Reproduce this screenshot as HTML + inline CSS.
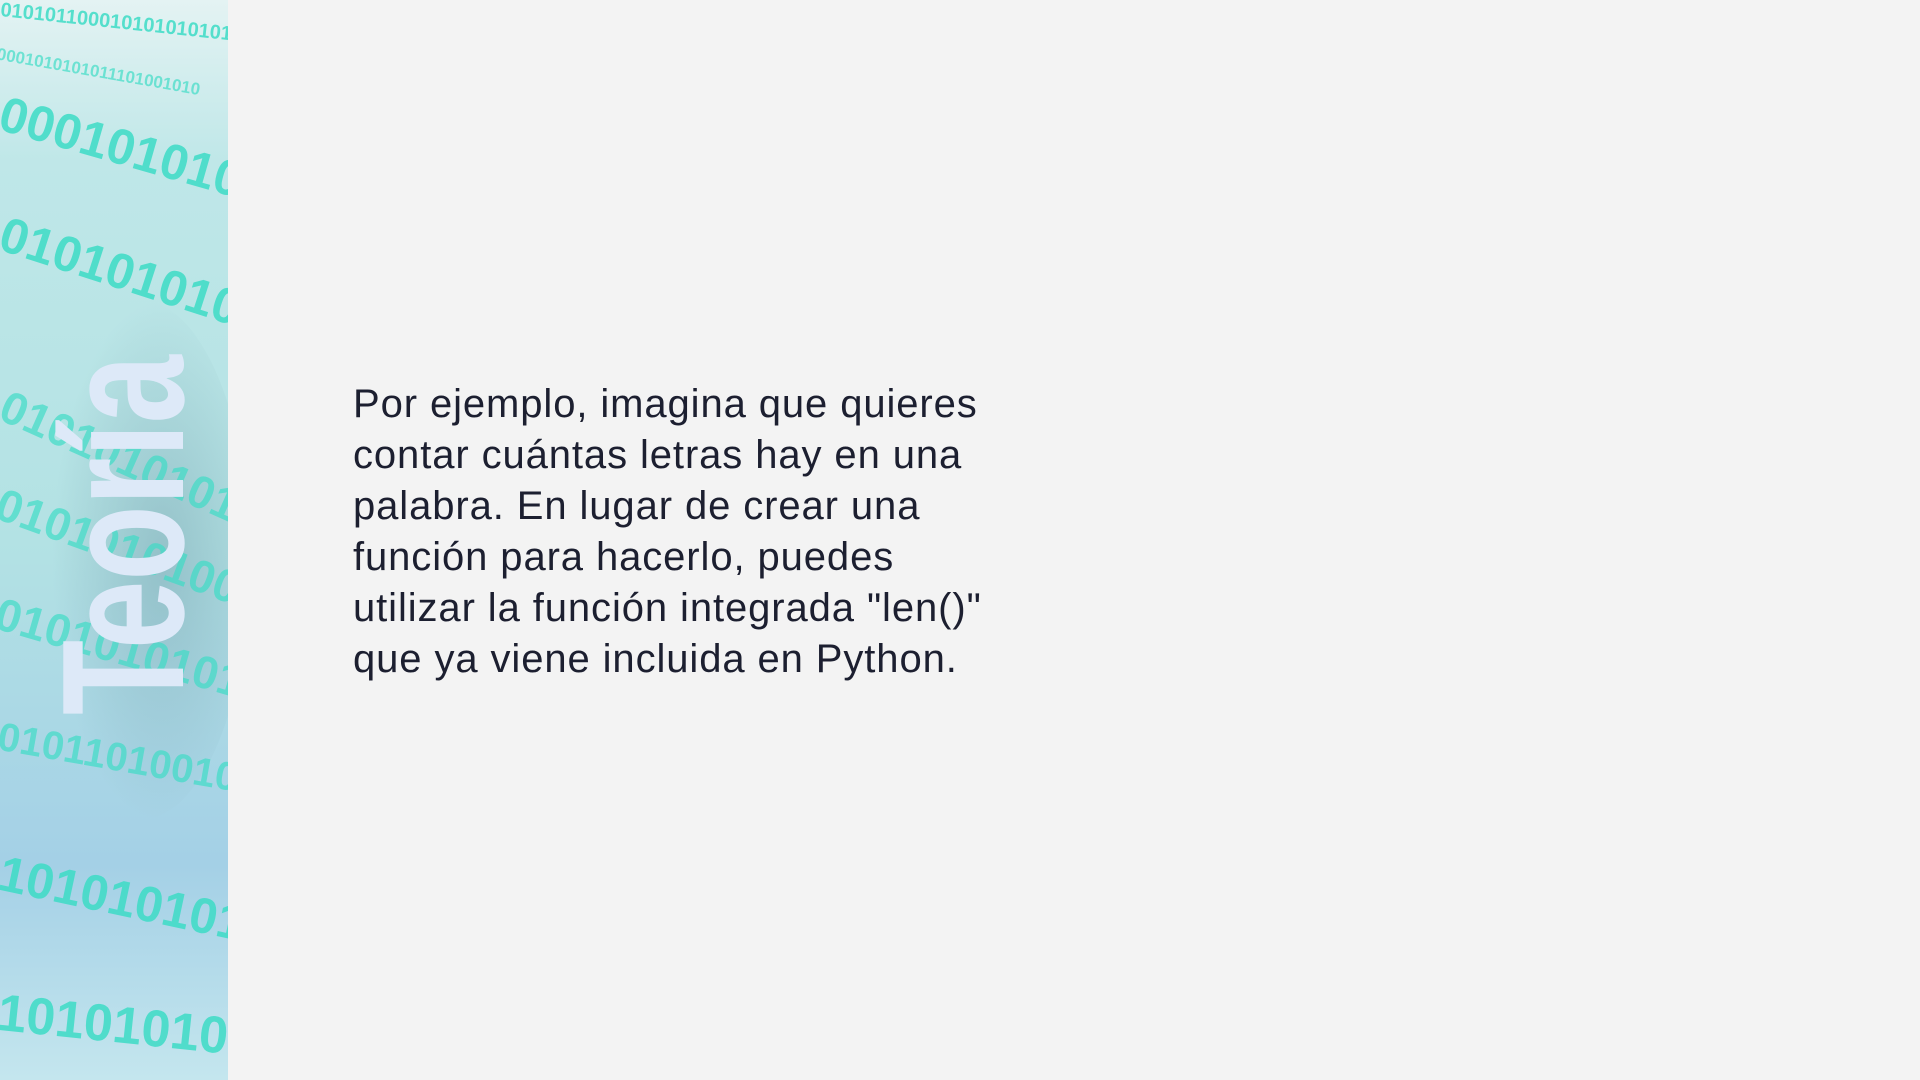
<!DOCTYPE html>
<html><head><meta charset="utf-8"><style>
html,body{margin:0;padding:0;width:1920px;height:1080px;overflow:hidden;background:#f3f3f3}
.panel{position:absolute;left:0;top:0;width:228px;height:1080px;overflow:hidden}
.txt{position:absolute;left:353px;top:379px;font-family:"Liberation Sans",sans-serif;font-size:40px;line-height:51px;color:#1c1f30;letter-spacing:0.9px;white-space:nowrap}
</style></head><body>
<div class="panel">
<svg width="228" height="1080" viewBox="0 0 228 1080">
<defs>
<linearGradient id="g" x1="0" y1="0" x2="0" y2="1">
<stop offset="0" stop-color="#e4f3f3"/>
<stop offset="0.15" stop-color="#bfe7e8"/>
<stop offset="0.5" stop-color="#b3e2e4"/>
<stop offset="0.8" stop-color="#a4d0e6"/>
<stop offset="1" stop-color="#c4e6ee"/>
</linearGradient>
<radialGradient id="s" cx="0.6" cy="0.5" r="0.5">
<stop offset="0" stop-color="#6f9aa8" stop-opacity="0.45"/>
<stop offset="1" stop-color="#6f9aa8" stop-opacity="0"/>
</radialGradient>
</defs>
<rect width="228" height="1080" fill="url(#g)"/>
<ellipse cx="140" cy="560" rx="110" ry="260" fill="url(#s)"/>
<g font-family="Liberation Sans, sans-serif" font-weight="bold" fill="#3ddcc6" opacity="0.85">
<text x="0" y="16" font-size="20" transform="rotate(6 0 16)">010101100010101010101</text>
<text x="-4" y="60" font-size="17" transform="rotate(10 0 60)" opacity="0.8">0001010101011101001010</text>
<text x="-4" y="130" font-size="50" transform="rotate(16 0 130)">000101010101</text>
<text x="-4" y="250" font-size="50" transform="rotate(18 0 250)">0101010101010</text>
<text x="-4" y="420" font-size="46" transform="rotate(24 0 420)" opacity="0.8">0101010101010</text>
<text x="-8" y="520" font-size="46" transform="rotate(20 0 520)" opacity="0.8">0101010100101</text>
<text x="-8" y="630" font-size="46" transform="rotate(16 0 630)" opacity="0.8">0101010101010</text>
<text x="-4" y="750" font-size="40" transform="rotate(10 0 750)" opacity="0.8">0101101001010010101</text>
<text x="-4" y="890" font-size="50" transform="rotate(12 0 890)">10101010101010</text>
<text x="-4" y="1030" font-size="52" transform="rotate(6 0 1030)">101010101101001</text>
</g>
<text x="0" y="0" transform="translate(183 715) rotate(-90)" font-family="Liberation Sans, sans-serif" font-weight="bold" font-size="174" fill="#dde9f8" textLength="360" lengthAdjust="spacingAndGlyphs">Teoría</text>
</svg>
</div>
<div class="txt">Por ejemplo, imagina que quieres<br>contar cuántas letras hay en una<br>palabra. En lugar de crear una<br>función para hacerlo, puedes<br>utilizar la función integrada "len()"<br>que ya viene incluida en Python.</div>
</body></html>
